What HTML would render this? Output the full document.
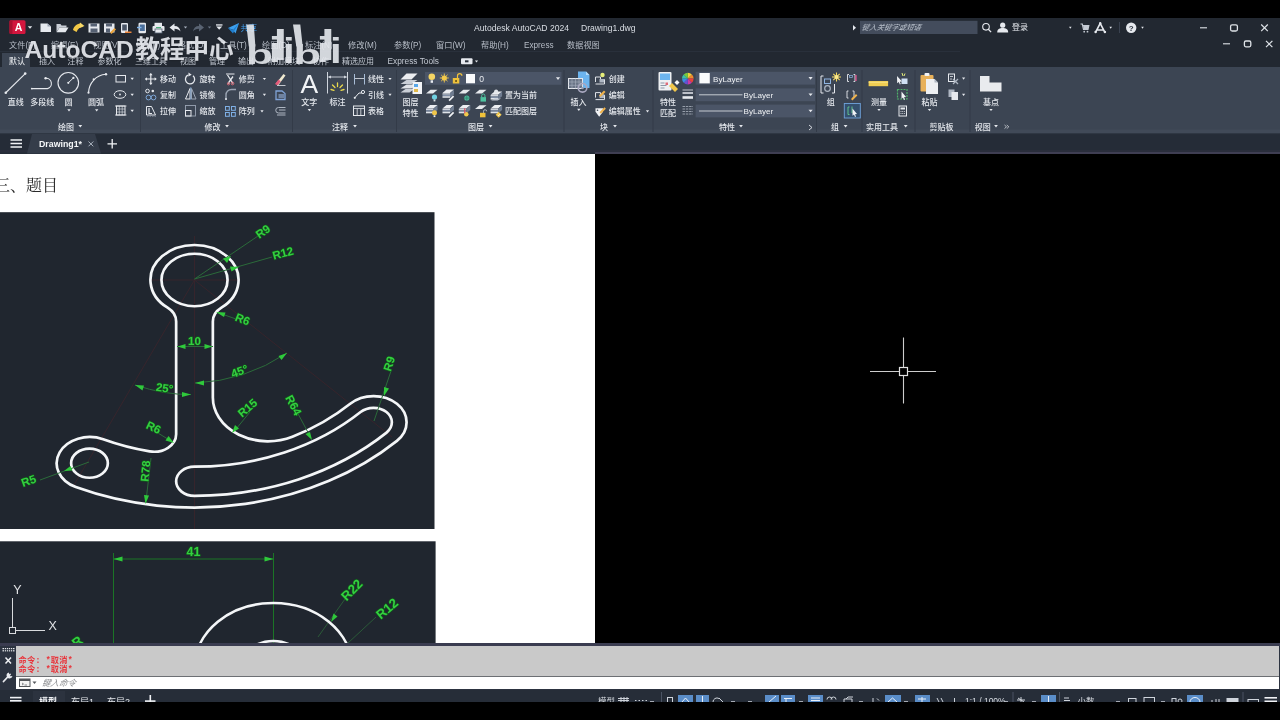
<!DOCTYPE html>
<html lang="zh">
<head>
<meta charset="utf-8">
<title>Autodesk AutoCAD 2024 - Drawing1.dwg</title>
<style>
*{box-sizing:border-box;margin:0;padding:0}
html,body{width:1280px;height:720px;overflow:hidden;background:#000}
body{font-family:"Liberation Sans","Noto Sans CJK SC",sans-serif;color:#dfe3e8;font-size:9px}
#app{position:relative;width:1280px;height:720px;background:#000;overflow:hidden;filter:blur(.35px)}
.abs{position:absolute}
#title{position:absolute;left:0;top:18px;width:1280px;height:34px;background:#212832}
#tabs{position:absolute;left:0;top:52px;width:1280px;height:15px;background:#212832}
#ribbon{position:absolute;left:0;top:67px;width:1280px;height:67px;background:#3a4351}
#doctabs{position:absolute;left:0;top:134px;width:1280px;height:20px;background:#242b36}
#paper{position:absolute;left:0;top:154px;width:595px;height:489px;background:#fff;overflow:hidden}
#model{position:absolute;left:595px;top:154px;width:685px;height:489px;background:#000}
#cmd{position:absolute;left:0;top:642.5px;width:1280px;height:47.5px;background:#2c3340}
#status{position:absolute;left:0;top:690px;width:1280px;height:12px;background:#262d38;overflow:hidden}
.t{position:absolute;white-space:nowrap;line-height:1}
</style>
</head>
<body>
<div id="app">
<svg class="abs" style="left:0;top:18px" width="1280" height="136" viewBox="0 18 1280 136" font-family="'Liberation Sans','Noto Sans CJK SC',sans-serif">
<rect x="0" y="18" width="1280" height="50" fill="#222831"/>
<rect x="0" y="51" width="960" height="1" fill="#29303b"/>
<rect x="0" y="67" width="1280" height="67" fill="#3c4553"/>
<rect x="2" y="53" width="28" height="15" fill="#3c4553"/>
<rect x="0" y="133" width="1280" height="21" fill="#252c37"/>
<rect x="0" y="133.3" width="1280" height="1" fill="#2b323e"/>
<rect x="0" y="129.5" width="1280" height="3.8" fill="#414a58"/>
<rect x="0" y="150" width="1280" height="2.5" fill="#2a2e3c"/>
<rect x="595" y="152.3" width="685" height="1.4" fill="#4a465e"/>
<rect x="9.5" y="20.3" width="16" height="13.6" rx="1.5" fill="#d3163e"/>
<rect x="9.5" y="20.3" width="3" height="13.6" rx="1" fill="#a8102f"/>
<text x="18.6" y="31.09" font-size="10.5" fill="#fff" font-weight="bold" text-anchor="middle" >A</text>
<path d="M27.8 26.2h4.4l-2.2 2.6z" fill="#e4e7ec"/>
<path d="M40.5 23.5h7l3.5 3v5.5h-10.5z" fill="#e6e9ee"/><path d="M47.5 23.5v3h3.5" fill="#9aa3b0"/>
<path d="M56.5 24h4l1 1.5h5v2h-7l-3 4.5z" fill="#c9ced6"/><path d="M59.5 27.5h9l-3 4.8h-9z" fill="#e6e9ee"/>
<path d="M73 30c1-4 4-6.5 8-6.5l2 3.5c-3 0-5 1.5-6.5 5z" fill="#f3c846"/><path d="M80 22.5l4.5 3.5-5 2z" fill="#f7d968"/>
<rect x="88.5" y="23.5" width="11" height="9" fill="#e6e9ee"/><rect x="90.5" y="23.5" width="6.5" height="3" fill="#566173"/><rect x="90.5" y="28.5" width="7" height="4" fill="#566173"/>
<rect x="104" y="23.5" width="10.5" height="9" fill="#e6e9ee"/><rect x="106" y="23.5" width="6" height="3" fill="#566173"/><rect x="106" y="28.5" width="4" height="4" fill="#566173"/><path d="M110 32.5l4.5-4.5 1.5 1.5-4.5 4.5z" fill="#e9a33c"/>
<rect x="121" y="23" width="7" height="10" rx="1" fill="#e6e9ee"/><rect x="122.2" y="24.5" width="4.6" height="6" fill="#4a5566"/><path d="M125 31.5h6.5v1.5h-6.5z" fill="#e9843c"/>
<rect x="138.5" y="22.8" width="7.5" height="10.5" rx="1.2" fill="#e6e9ee"/><rect x="139.8" y="24.5" width="5" height="6.5" fill="#4a6e9a"/><path d="M137 27.5h4.5" stroke="#7fb6ee" stroke-width="1.4"/>
<rect x="154.5" y="22.8" width="7.5" height="3.5" fill="#e6e9ee"/><rect x="152.5" y="26" width="12" height="5" rx="1" fill="#e6e9ee"/><rect x="155" y="29" width="7" height="4" fill="#e6e9ee" stroke="#566173" stroke-width=".8"/><rect x="156" y="27" width="5" height="1.2" fill="#4fae7a"/>
<path d="M169.5 27.5l5-4v2.5c3.5 0 5.5 2 6 5.5-1.5-2-3-2.8-6-2.8v2.8z" fill="#e6e9ee"/>
<path d="M183.8 26.4h3.4l-1.7 2.2z" fill="#aab2bf"/>
<path d="M204 27.5l-5-4v2.5c-3.5 0-5.5 2-6 5.5 1.5-2 3-2.8 6-2.8v2.8z" fill="#596372"/>
<path d="M207.8 26.4h3.4l-1.7 2.2z" fill="#6a7484"/>
<rect x="216" y="24.3" width="6.5" height="1.3" fill="#e6e9ee"/>
<path d="M216.2 26.599999999999998h6l-3 3.2z" fill="#e6e9ee"/>
<path d="M228 28l11-5-3.5 10.5-2.5-3.8z" fill="#3da0ee"/><path d="M228 28l5 1.7 6-6.7-4.5 7.5-1.5 3z" fill="#1f7fd0"/>
<text x="240.5" y="30.61" font-size="8.4" fill="#3d9df0" font-weight="normal" text-anchor="start" >共享</text>
<text x="474" y="30.68" font-size="8.6" fill="#d9dde3" font-weight="normal" text-anchor="start" >Autodesk AutoCAD 2024</text>
<text x="581" y="30.68" font-size="8.6" fill="#d9dde3" font-weight="normal" text-anchor="start" >Drawing1.dwg</text>
<path d="M853 25l3 2.75-3 2.75z" fill="#e6e9ee"/>
<rect x="860" y="20.8" width="117.5" height="13.2" fill="#434c5c"/>
<text x="862" y="30.24" font-size="7.4" fill="#b9c0cb" font-weight="normal" text-anchor="start" font-style="italic" transform="translate(5.8 0) skewX(-12)">键入关键字或短语</text>
<circle cx="986" cy="26.8" r="3.3" fill="none" stroke="#e6e9ee" stroke-width="1.1"/><path d="M988.3 29.3l2.8 2.8" stroke="#e6e9ee" stroke-width="1.3"/>
<circle cx="1002.7" cy="25.2" r="2.6" fill="#e6e9ee"/><path d="M997.2 32.5c0-3.5 2.5-4.5 5.5-4.5s5.5 1 5.5 4.5z" fill="#e6e9ee"/>
<text x="1012" y="30.46" font-size="8" fill="#e4e7ec" font-weight="normal" text-anchor="start" >登录</text>
<path d="M1069 26.8h2.6l-1.3 2z" fill="#e6e9ee"/>
<path d="M1080.5 24h1.8l1.2 5.5h4.5l.8-4h-5.8" fill="none" stroke="#c4cad3" stroke-width="1.2"/><path d="M1083 25.3h5.8l-.8 3.8h-4.3z" fill="#c4cad3"/><circle cx="1084.2" cy="31.7" r=".9" fill="#c4cad3"/><circle cx="1087.5" cy="31.7" r=".9" fill="#c4cad3"/>
<path d="M1095.5 32.3l4.7-9 4.7 9M1097 30h6.5" fill="none" stroke="#e6e9ee" stroke-width="1.6" stroke-linejoin="round"/><circle cx="1100.2" cy="23.3" r="1.2" fill="#e6e9ee"/><circle cx="1095.6" cy="32" r="1.2" fill="#e6e9ee"/><circle cx="1104.9" cy="32" r="1.2" fill="#e6e9ee"/>
<path d="M1109.4 26.8h2.6l-1.3 2z" fill="#e6e9ee"/>
<rect x="1119" y="22" width="1" height="11" fill="#3a4250"/>
<circle cx="1131.2" cy="27.7" r="5.2" fill="#e6e9ee"/>
<text x="1131.2" y="30.86" font-size="8" fill="#2a313c" font-weight="bold" text-anchor="middle" >?</text>
<path d="M1141.2 26.8h2.6l-1.3 2z" fill="#e6e9ee"/>
<path d="M1200 27.8h7" stroke="#dfe3e8" stroke-width="1.1"/>
<rect x="1230.6" y="24.8" width="6.8" height="6.2" rx="1.5" fill="none" stroke="#dfe3e8" stroke-width="1.3"/>
<path d="M1261.2 24.5l6.6 6.6M1267.8 24.5l-6.6 6.6" stroke="#dfe3e8" stroke-width="1.2"/>
<path d="M1223 43.8h7" stroke="#dfe3e8" stroke-width="1.1"/>
<rect x="1244.4" y="41" width="6.4" height="5.8" rx="1.5" fill="none" stroke="#dfe3e8" stroke-width="1.3"/>
<path d="M1266 40.8l6.4 6.4M1272.4 40.8l-6.4 6.4" stroke="#dfe3e8" stroke-width="1.2"/>
<text x="9" y="47.83" font-size="8.2" fill="#b6bcc6" font-weight="normal" text-anchor="start" >文件(F)</text>
<text x="51" y="47.83" font-size="8.2" fill="#b6bcc6" font-weight="normal" text-anchor="start" >编辑(E)</text>
<text x="93" y="47.83" font-size="8.2" fill="#b6bcc6" font-weight="normal" text-anchor="start" >视图(V)</text>
<text x="136" y="47.83" font-size="8.2" fill="#b6bcc6" font-weight="normal" text-anchor="start" >插入(I)</text>
<text x="178" y="47.83" font-size="8.2" fill="#b6bcc6" font-weight="normal" text-anchor="start" >格式(O)</text>
<text x="220" y="47.83" font-size="8.2" fill="#b6bcc6" font-weight="normal" text-anchor="start" >工具(T)</text>
<text x="262" y="47.83" font-size="8.2" fill="#b6bcc6" font-weight="normal" text-anchor="start" >绘图(D)</text>
<text x="305" y="47.83" font-size="8.2" fill="#b6bcc6" font-weight="normal" text-anchor="start" >标注(N)</text>
<text x="348" y="47.83" font-size="8.2" fill="#b6bcc6" font-weight="normal" text-anchor="start" >修改(M)</text>
<text x="394" y="47.83" font-size="8.2" fill="#b6bcc6" font-weight="normal" text-anchor="start" >参数(P)</text>
<text x="436" y="47.83" font-size="8.2" fill="#b6bcc6" font-weight="normal" text-anchor="start" >窗口(W)</text>
<text x="481" y="47.83" font-size="8.2" fill="#b6bcc6" font-weight="normal" text-anchor="start" >帮助(H)</text>
<text x="524" y="47.83" font-size="8.2" fill="#b6bcc6" font-weight="normal" text-anchor="start" >Express</text>
<text x="567" y="47.83" font-size="8.2" fill="#b6bcc6" font-weight="normal" text-anchor="start" >数据视图</text>
<text x="9" y="64.26" font-size="8" fill="#f2f4f7" font-weight="normal" text-anchor="start" >默认</text>
<text x="39" y="64.26" font-size="8" fill="#c2c8d1" font-weight="normal" text-anchor="start" >插入</text>
<text x="67.5" y="64.26" font-size="8" fill="#c2c8d1" font-weight="normal" text-anchor="start" >注释</text>
<text x="97.5" y="64.26" font-size="8" fill="#c2c8d1" font-weight="normal" text-anchor="start" >参数化</text>
<text x="135" y="64.26" font-size="8" fill="#c2c8d1" font-weight="normal" text-anchor="start" >三维工具</text>
<text x="180" y="64.26" font-size="8" fill="#c2c8d1" font-weight="normal" text-anchor="start" >视图</text>
<text x="209" y="64.26" font-size="8" fill="#c2c8d1" font-weight="normal" text-anchor="start" >管理</text>
<text x="238" y="64.26" font-size="8" fill="#c2c8d1" font-weight="normal" text-anchor="start" >输出</text>
<text x="268" y="64.26" font-size="8" fill="#c2c8d1" font-weight="normal" text-anchor="start" >附加模块</text>
<text x="313" y="64.26" font-size="8" fill="#c2c8d1" font-weight="normal" text-anchor="start" >协作</text>
<text x="342" y="64.26" font-size="8" fill="#c2c8d1" font-weight="normal" text-anchor="start" >精选应用</text>
<text x="387.5" y="64.37" font-size="8.3" fill="#c2c8d1" font-weight="normal" text-anchor="start" >Express Tools</text>
<rect x="461" y="58.3" width="11.5" height="6" rx="1" fill="#e6e9ee"/><rect x="465" y="60.3" width="3.5" height="2" fill="#2a313c"/>
<path d="M474.9 60.4h3.2l-1.6 2.2z" fill="#e6e9ee"/>
<rect x="140" y="70" width="1" height="62" fill="#333b48"/>
<rect x="292" y="70" width="1" height="62" fill="#333b48"/>
<rect x="396" y="70" width="1" height="62" fill="#333b48"/>
<rect x="563.5" y="70" width="1" height="62" fill="#333b48"/>
<rect x="652.5" y="70" width="1" height="62" fill="#333b48"/>
<rect x="816" y="70" width="1" height="62" fill="#333b48"/>
<rect x="861.5" y="70" width="1" height="62" fill="#333b48"/>
<rect x="914.5" y="70" width="1" height="62" fill="#333b48"/>
<rect x="969.5" y="70" width="1" height="62" fill="#333b48"/>
<path d="M6 92.5L25 73.8" stroke="#e6e9ee" fill="none" stroke-width="1.1"/><circle cx="5.8" cy="92.7" r="1.3" fill="#e6e9ee"/><circle cx="25.2" cy="73.6" r="1.3" fill="#e6e9ee"/>
<text x="15.7" y="104.56" font-size="8" fill="#e4e7ec" font-weight="500" text-anchor="middle" >直线</text>
<path d="M31.6 88.6H47.5A5.3 5.3 0 0 0 45.8 78.2" stroke="#e6e9ee" fill="none" stroke-width="1.1"/><circle cx="45.6" cy="78.2" r="1.2" fill="#e6e9ee"/><circle cx="31.8" cy="88.6" r=".9" fill="#e6e9ee"/>
<text x="42.3" y="104.56" font-size="8" fill="#e4e7ec" font-weight="500" text-anchor="middle" >多段线</text>
<circle cx="68.3" cy="82.8" r="10.3" stroke="#e6e9ee" fill="none" stroke-width="1.1"/><path d="M68.3 82.8L73.3 78" stroke="#e6e9ee" fill="none" stroke-width="1"/><circle cx="68.3" cy="82.8" r="1.1" fill="#e6e9ee"/><circle cx="73.4" cy="77.9" r="1.1" fill="#e6e9ee"/>
<text x="68.4" y="104.56" font-size="8" fill="#e4e7ec" font-weight="500" text-anchor="middle" >圆</text>
<path d="M67.3 109.2h3.4l-1.7 2.2z" fill="#e6e9ee"/>
<path d="M88.5 92.7C89 83 96 75 106 74.3" stroke="#e6e9ee" fill="none" stroke-width="1.1"/><circle cx="88.5" cy="92.7" r="1.1" fill="#e6e9ee"/><circle cx="106" cy="74.3" r="1.2" fill="#e6e9ee"/><circle cx="93.7" cy="79.3" r="1.1" fill="#e6e9ee"/>
<text x="96" y="104.56" font-size="8" fill="#e4e7ec" font-weight="500" text-anchor="middle" >圆弧</text>
<path d="M95 109.2h3.4l-1.7 2.2z" fill="#e6e9ee"/>
<rect x="116" y="75.5" width="9.5" height="6.5" stroke="#e6e9ee" fill="none" stroke-width="1"/>
<path d="M130.5 77.7h3.4l-1.7 2.2z" fill="#e6e9ee"/>
<ellipse cx="120" cy="94.5" rx="5.8" ry="3.8" stroke="#e6e9ee" fill="none" stroke-width="1"/><circle cx="120" cy="94.5" r=".9" fill="#e6e9ee"/>
<path d="M130.5 93.7h3.4l-1.7 2.2z" fill="#e6e9ee"/>
<rect x="116.5" y="106" width="8.5" height="9" stroke="#e6e9ee" fill="none" stroke-width="1"/><path d="M116.5 109h8.5M116.5 112h8.5M119.3 106v9M122.2 106v9" stroke="#e6e9ee" fill="none" stroke-width=".6"/><path d="M115 106h11.5M115 115h11.5" stroke="#e6e9ee" fill="none" stroke-width=".8"/>
<path d="M130.5 109.7h3.4l-1.7 2.2z" fill="#e6e9ee"/>
<text x="58" y="129.56" font-size="8" fill="#e4e7ec" font-weight="500" text-anchor="start" >绘图</text>
<path d="M78.39999999999999 125.1h3.8l-1.9 2.4z" fill="#e6e9ee"/>
<path d="M150.8 73.8v10.5M145.6 79h10.4" stroke="#e6e9ee" fill="none" stroke-width="1.2"/><path d="M150.8 73l1.8 2.2h-3.6zM150.8 85l1.8-2.2h-3.6zM144.8 79l2.2-1.8v3.6zM156.8 79l-2.2-1.8v3.6z" fill="#e6e9ee"/>
<text x="160" y="81.96" font-size="8" fill="#e4e7ec" font-weight="500" text-anchor="start" >移动</text>
<circle cx="147.5" cy="91" r="1.8" stroke="#e6e9ee" fill="none" stroke-width="1"/><circle cx="152.8" cy="91" r="1.3" fill="#e6e9ee"/><circle cx="148.5" cy="97.5" r="2.4" fill="none" stroke="#7ea7d8" stroke-width="1"/><circle cx="153.5" cy="97.5" r="2.4" fill="none" stroke="#7ea7d8" stroke-width="1"/>
<text x="160" y="97.56" font-size="8" fill="#e4e7ec" font-weight="500" text-anchor="start" >复制</text>
<path d="M146.5 106.5h5l4 8.5h-9z" stroke="#e6e9ee" fill="none" stroke-width="1"/><path d="M149 108v5.5h3" stroke="#e6e9ee" fill="none" stroke-width="1.2"/><path d="M147 116.2h9" stroke="#8d97a6" stroke-width=".8" stroke-dasharray="1.5 1"/>
<text x="160" y="114.26" font-size="8" fill="#e4e7ec" font-weight="500" text-anchor="start" >拉伸</text>
<path d="M193 75.8a4.6 4.6 0 1 1-5 -.6" stroke="#e6e9ee" fill="none" stroke-width="1.3"/><path d="M188.5 72.5l3.2 2.3-3.4 1.8z" fill="#e6e9ee"/>
<text x="199.4" y="81.96" font-size="8" fill="#e4e7ec" font-weight="500" text-anchor="start" >旋转</text>
<path d="M190 88.5l-4.5 10.5h4.5z" stroke="#e6e9ee" fill="none" stroke-width="1"/><path d="M191.5 88.5l4.5 10.5h-4.5z" fill="none" stroke="#9aa4b3" stroke-width="1"/><path d="M190.8 87v13" stroke="#7ea7d8" stroke-width=".7"/>
<text x="199.4" y="97.56" font-size="8" fill="#e4e7ec" font-weight="500" text-anchor="start" >镜像</text>
<rect x="185.5" y="105.5" width="10" height="10.5" fill="none" stroke="#9aa4b3" stroke-width=".9"/><rect x="185.5" y="110.5" width="5.5" height="5.5" stroke="#e6e9ee" fill="none" stroke-width="1"/>
<text x="199.4" y="114.26" font-size="8" fill="#e4e7ec" font-weight="500" text-anchor="start" >缩放</text>
<path d="M226 74h8.5" stroke="#e6e9ee" fill="none" stroke-width="1"/><path d="M227.5 75l5.5 8.5M233 76.5l-5 7" stroke="#e6e9ee" fill="none" stroke-width="1.3"/><circle cx="232.5" cy="83.5" r="1.3" fill="none" stroke="#e06a78" stroke-width="1"/><circle cx="228.5" cy="83.8" r="1.1" fill="none" stroke="#e06a78" stroke-width="1"/>
<text x="238.8" y="81.96" font-size="8" fill="#e4e7ec" font-weight="500" text-anchor="start" >修剪</text>
<path d="M262.79999999999995 77.9h3.2l-1.6 2.2z" fill="#e6e9ee"/>
<path d="M226 100v-5a5.5 5.5 0 0 1 5.5-5.5h4.5" fill="none" stroke="#9aa4b3" stroke-width="1.4"/><path d="M226 100v-2" stroke="#e6e9ee" stroke-width="1.4"/>
<text x="238.8" y="97.56" font-size="8" fill="#e4e7ec" font-weight="500" text-anchor="start" >圆角</text>
<path d="M262.79999999999995 93.7h3.2l-1.6 2.2z" fill="#e6e9ee"/>
<rect x="225.5" y="106.5" width="3.8" height="3.8" fill="none" stroke="#7fb0e6" stroke-width="1"/>
<rect x="231.5" y="106.5" width="3.8" height="3.8" fill="none" stroke="#7fb0e6" stroke-width="1"/>
<rect x="225.5" y="112.5" width="3.8" height="3.8" fill="none" stroke="#7fb0e6" stroke-width="1"/>
<rect x="231.5" y="112.5" width="3.8" height="3.8" fill="none" stroke="#7fb0e6" stroke-width="1"/>
<text x="238.8" y="114.26" font-size="8" fill="#e4e7ec" font-weight="500" text-anchor="start" >阵列</text>
<path d="M260.4 110.2h3.2l-1.6 2.2z" fill="#e6e9ee"/>
<path d="M276 83.5l7.5-9.5 2 1.5-7 9.5z" fill="#f0ead0"/><path d="M275 84l3.5-4.5 2.2 1.7-3.2 4.3z" fill="#e25a7a"/><path d="M277 85.5h8.5" stroke="#e6e9ee" stroke-width=".8"/>
<path d="M276 91h6l3 2.5v6h-9z" fill="none" stroke="#7fa2d6" stroke-width="1.3"/><path d="M278.5 94h5.5v4h-5.5z" fill="#9bb6e0" opacity=".55"/>
<path d="M285.5 107.5h-7a2.7 2.7 0 0 0 0 5.5h7M285.5 110h-6.5M285.5 115h-8.5" fill="none" stroke="#aeb6c2" stroke-width="1"/>
<text x="204.4" y="129.56" font-size="8" fill="#e4e7ec" font-weight="500" text-anchor="start" >修改</text>
<path d="M225.1 125.1h3.8l-1.9 2.4z" fill="#e6e9ee"/>
<text x="309.3" y="93.21" font-size="26.5" fill="#f1f3f6" font-weight="normal" text-anchor="middle" >A</text>
<text x="309.3" y="104.56" font-size="8" fill="#e4e7ec" font-weight="500" text-anchor="middle" >文字</text>
<path d="M307.7 109.10000000000001h3.4l-1.7 2.2z" fill="#e6e9ee"/>
<path d="M327.5 72v21.5M347.5 72v21.5" stroke="#cfd4dc" stroke-width="1"/><path d="M328.5 77h18" stroke="#cfd4dc" stroke-width=".9"/><path d="M328 77l3-1.5v3zM347 77l-3-1.5v3z" fill="#cfd4dc"/>
<path d="M337.5 83v3.5M332.5 85l2.5 2.5M342.5 85l-2.5 2.5M331 89.5l3 .8M344 89.5l-3 .8" stroke="#ead94c" stroke-width="1.3" stroke-linecap="round"/>
<text x="337.4" y="104.56" font-size="8" fill="#e4e7ec" font-weight="500" text-anchor="middle" >标注</text>
<path d="M354.5 74v10.5M364.5 74v10.5" stroke="#a9bdd6" stroke-width="1"/><path d="M355 78.5h9" stroke="#cfd4dc" stroke-width=".9"/>
<text x="368" y="81.96" font-size="8" fill="#e4e7ec" font-weight="500" text-anchor="start" >线性</text>
<path d="M388.4 77.9h3.2l-1.6 2.2z" fill="#e6e9ee"/>
<path d="M355 97.5l4-4.5h3" stroke="#e6e9ee" fill="none" stroke-width="1"/><circle cx="363" cy="92" r="1.6" stroke="#e6e9ee" fill="none" stroke-width="1"/><circle cx="354.8" cy="97.8" r="1.1" fill="#e6e9ee"/>
<text x="368" y="97.56" font-size="8" fill="#e4e7ec" font-weight="500" text-anchor="start" >引线</text>
<path d="M388.4 93.7h3.2l-1.6 2.2z" fill="#e6e9ee"/>
<rect x="353.5" y="106" width="11" height="9.5" stroke="#e6e9ee" fill="none" stroke-width="1"/><path d="M353.5 108.5h11M357.2 108.5v7M360.8 108.5v7" stroke="#e6e9ee" fill="none" stroke-width=".8"/>
<text x="368" y="114.26" font-size="8" fill="#e4e7ec" font-weight="500" text-anchor="start" >表格</text>
<text x="332" y="129.56" font-size="8" fill="#e4e7ec" font-weight="500" text-anchor="start" >注释</text>
<path d="M353.1 125.1h3.8l-1.9 2.4z" fill="#e6e9ee"/>
<path d="M400.5 79.5l6-6h11l-6 6z" fill="#eceef1"/><path d="M400.5 84l6-4h11l-6 4z" fill="#c9ced6"/><path d="M400.5 88.5l6-4h11l-6 4z" fill="#dfe2e7"/><path d="M400.5 92.5l5-3.5h9l-5 3.5z" fill="#c9ced6"/>
<rect x="412.5" y="82" width="9.5" height="12" fill="#f1f3f6"/><rect x="414" y="84" width="4" height="3" fill="#58a7e8"/><rect x="414" y="89" width="4" height="3" fill="#e2b94a"/>
<text x="410.6" y="104.76" font-size="8" fill="#e4e7ec" font-weight="500" text-anchor="middle" >图层</text>
<text x="410.6" y="115.86" font-size="8" fill="#e4e7ec" font-weight="500" text-anchor="middle" >特性</text>
<rect x="425" y="72" width="136.5" height="12.8" fill="#4b5567"/>
<circle cx="431.8" cy="76.8" r="3.3" fill="#f4d564"/><rect x="430.6" y="80.3" width="2.4" height="2.5" fill="#e9edf2"/>
<circle cx="444.3" cy="78" r="2.6" fill="#f2c94c"/><path d="M444.3 73.5v9M439.8 78h9M441.1 74.8l6.4 6.4M447.5 74.8l-6.4 6.4" stroke="#f2c94c" stroke-width=".9"/>
<rect x="452.8" y="78" width="6.5" height="5.5" fill="#f0c23a"/><path d="M457.5 78v-2.2a2.2 2.2 0 0 1 4.4 0" fill="none" stroke="#f0c23a" stroke-width="1.2"/><rect x="455.3" y="80" width="1.5" height="2" fill="#5b4a14"/>
<rect x="466" y="74" width="9" height="9.3" fill="#fafbfc"/>
<text x="479.3" y="81.58" font-size="8.6" fill="#e9ecf0" font-weight="500" text-anchor="start" >0</text>
<path d="M555.9 77.3h4.2l-2.1 2.6z" fill="#e6e9ee"/>
<path d="M426 93.5l4.5-3.8h7l-4.5 3.8z" fill="#e6e9ed"/>
<circle cx="434.5" cy="97.1" r="2.6" fill="#6fd0e0"/><rect x="433.6" y="99.6" width="1.8" height="1.8" fill="#dfe6ea"/>
<path d="M442.5 93l4-3.4h7.5l-4 3.4z" fill="#eceef2"/>
<path d="M442.5 93.2h7.5v1.5h-7.5z" fill="#cfd4dc"/><path d="M442.5 94.7h7.5v1.5h-7.5z" fill="#7f8ea6"/><path d="M442.5 96.2h7.5v1.6h-7.5z" fill="#dfe3e8"/><path d="M450 93.2l4-3.4v4.6l-4 3.4z" fill="#6f7c90"/>
<path d="M448.5 100.1l4.5-4.5 1.2 1.2-4.5 4.5z" fill="#f1f3f6"/>
<path d="M458.8 93.5l4.5-3.8h7l-4.5 3.8z" fill="#e6e9ed"/>
<circle cx="466.8" cy="98.1" r="2.6" fill="#4fb59a"/><path d="M463.8 98.1h6M466.8 95.1v6" stroke="#2d7f6b" stroke-width=".7"/>
<path d="M475 93.5l4.5-3.8h7l-4.5 3.8z" fill="#e6e9ed"/>
<rect x="480.5" y="97.1" width="5.5" height="4.5" fill="#4fc2a0"/><path d="M481.7 97.1v-1.5a1.6 1.6 0 0 1 3.2 0v1.5" fill="none" stroke="#4fc2a0" stroke-width="1"/>
<path d="M490.6 94.8l4-3.4h7.5l-4 3.4z" fill="#eceef2"/>
<path d="M490.6 95h7.5v1.5h-7.5z" fill="#cfd4dc"/><path d="M490.6 96.5h7.5v1.5h-7.5z" fill="#7f8ea6"/><path d="M490.6 98h7.5v1.6h-7.5z" fill="#dfe3e8"/><path d="M498.1 95l4-3.4v4.6l-4 3.4z" fill="#6f7c90"/>
<circle cx="496.1" cy="91.6" r="2" fill="#e3e6eb"/><path d="M491.1 100.6l3.5-2h6.5l-3.5 2z" fill="#b9c0cb"/>
<text x="505" y="97.56" font-size="8" fill="#e4e7ec" font-weight="500" text-anchor="start" >置为当前</text>
<path d="M426 108.5l4-3.4h7.5l-4 3.4z" fill="#eceef2"/>
<path d="M426 108.7h7.5v1.5h-7.5z" fill="#cfd4dc"/><path d="M426 110.2h7.5v1.5h-7.5z" fill="#7f8ea6"/><path d="M426 111.7h7.5v1.6h-7.5z" fill="#dfe3e8"/><path d="M433.5 108.7l4-3.4v4.6l-4 3.4z" fill="#6f7c90"/>
<circle cx="434.5" cy="112.8" r="2.5" fill="#f0c64a"/><rect x="433.6" y="115.3" width="1.8" height="1.8" fill="#e9edf2"/>
<path d="M442.5 108.5l4-3.4h7.5l-4 3.4z" fill="#eceef2"/>
<path d="M442.5 108.7h7.5v1.5h-7.5z" fill="#cfd4dc"/><path d="M442.5 110.2h7.5v1.5h-7.5z" fill="#7f8ea6"/><path d="M442.5 111.7h7.5v1.6h-7.5z" fill="#dfe3e8"/><path d="M450 108.7l4-3.4v4.6l-4 3.4z" fill="#6f7c90"/>
<path d="M448.5 116.3l4.5-4.5 1.2 1.2-4.5 4.5z" fill="#f1f3f6"/>
<path d="M458.8 108.5l4-3.4h7.5l-4 3.4z" fill="#eceef2"/>
<path d="M458.8 108.7h7.5v1.5h-7.5z" fill="#cfd4dc"/><path d="M458.8 110.2h7.5v1.5h-7.5z" fill="#7f8ea6"/><path d="M458.8 111.7h7.5v1.6h-7.5z" fill="#dfe3e8"/><path d="M466.3 108.7l4-3.4v4.6l-4 3.4z" fill="#6f7c90"/>
<circle cx="466.3" cy="114.3" r="2.2" fill="#f2c94c"/><path d="M464.8 108.3v5" stroke="#d64a5c" stroke-width="1.2"/>
<path d="M475 109l4.5-3.8h7l-4.5 3.8z" fill="#e6e9ed"/>
<rect x="480" y="112.8" width="5.5" height="4.5" fill="#f0c23a"/><path d="M483.5 112.8v-1.5a1.6 1.6 0 0 1 3.2 0" fill="none" stroke="#aeb6c2" stroke-width="1"/>
<path d="M490.6 108.5l4-3.4h7.5l-4 3.4z" fill="#eceef2"/>
<path d="M490.6 108.7h7.5v1.5h-7.5z" fill="#cfd4dc"/><path d="M490.6 110.2h7.5v1.5h-7.5z" fill="#7f8ea6"/><path d="M490.6 111.7h7.5v1.6h-7.5z" fill="#dfe3e8"/><path d="M498.1 108.7l4-3.4v4.6l-4 3.4z" fill="#6f7c90"/>
<path d="M495.6 114.8l3-3 3 3-3 3z" fill="#f0c64a"/><path d="M497.6 114.8l1 1 1.5-1.8" stroke="#fff" stroke-width=".7" fill="none"/>
<text x="505" y="114.26" font-size="8" fill="#e4e7ec" font-weight="500" text-anchor="start" >匹配图层</text>
<text x="468" y="129.56" font-size="8" fill="#e4e7ec" font-weight="500" text-anchor="start" >图层</text>
<path d="M488.70000000000005 125.1h3.8l-1.9 2.4z" fill="#e6e9ee"/>
<path d="M578 71.5h8l3.5 3.5v13h-11.5z" fill="#6cb4ee"/><path d="M586 71.5v3.5h3.5z" fill="#b6dbf8"/>
<rect x="568.5" y="78.5" width="14" height="10" fill="#6a7587" stroke="#e6e9ee" stroke-width="1"/><path d="M568.5 82h14M568.5 85.3h14M572 78.5v10M575.5 78.5v10M579 78.5v10" stroke="#aab2bf" stroke-width=".6"/>
<circle cx="582.5" cy="87.8" r="4.3" fill="none" stroke="#a9a8c0" stroke-width="1.6"/><circle cx="582.5" cy="88" r="1.3" fill="#9a9fb2"/>
<text x="578.4" y="104.56" font-size="8" fill="#e4e7ec" font-weight="500" text-anchor="middle" >插入</text>
<path d="M577.0999999999999 108.7h3.4l-1.7 2.2z" fill="#e6e9ee"/>
<path d="M595.5 82v-5h5v2.5h4v4.5h-9" fill="none" stroke="#dfe3e8" stroke-width="1"/><rect x="599.5" y="79" width="4.5" height="3.5" fill="#aeb6c2"/>
<circle cx="602.5" cy="75" r="2.2" fill="#e6ee7a"/>
<path d="M595.5 97.6v-5h5v2.5h4v4.5h-9" fill="none" stroke="#dfe3e8" stroke-width="1"/><rect x="599.5" y="94.6" width="4.5" height="3.5" fill="#aeb6c2"/>
<path d="M599 95.6l5-5 1.5 1.5-5 5z" fill="#f0b24a"/>
<path d="M595.5 108.3h7.5l-0 3.5-3.8 5-3.7-5z" fill="#f1f3f6"/><path d="M599.5 112.3l5-5 1.4 1.4-5 5z" fill="#f0b24a"/><circle cx="597.5" cy="110.3" r=".8" fill="#3c4553"/>
<text x="608.8" y="81.96" font-size="8" fill="#e4e7ec" font-weight="500" text-anchor="start" >创建</text>
<text x="608.8" y="97.56" font-size="8" fill="#e4e7ec" font-weight="500" text-anchor="start" >编辑</text>
<text x="608.8" y="114.26" font-size="8" fill="#e4e7ec" font-weight="500" text-anchor="start" >编辑属性</text>
<path d="M645.9 110.2h3.2l-1.6 2.2z" fill="#e6e9ee"/>
<text x="600" y="129.56" font-size="8" fill="#e4e7ec" font-weight="500" text-anchor="start" >块</text>
<path d="M613.1 125.1h3.8l-1.9 2.4z" fill="#e6e9ee"/>
<rect x="658.5" y="72" width="13" height="18.5" rx="1" fill="#eef0f3"/><rect x="660" y="73.5" width="10" height="6.5" fill="#6cb4ee"/><path d="M660.5 83h4M660.5 85.5h6M660.5 88h4" stroke="#8d97a6" stroke-width="1"/><rect x="665.5" y="82.5" width="2.5" height="2.5" fill="#e06a78"/>
<path d="M669 86l3-3 6 6-3 3z" fill="#f0c64a"/><path d="M674.5 82.5l2.5-2.5 2.5 2.5-2.5 2.5z" fill="#f6f7f9"/>
<text x="668" y="104.76" font-size="8" fill="#e4e7ec" font-weight="500" text-anchor="middle" >特性</text>
<text x="668" y="116.26" font-size="8" fill="#e4e7ec" font-weight="500" text-anchor="middle" >匹配</text>
<path d="M687.8 78.6L687.8 72.8A5.8 5.8 0 0 1 691.9 74.5z" fill="#f2d03a"/>
<path d="M687.8 78.6L691.9 74.5A5.8 5.8 0 0 1 693.6 78.6z" fill="#f08a2e"/>
<path d="M687.8 78.6L693.6 78.6A5.8 5.8 0 0 1 691.9 82.7z" fill="#e8413c"/>
<path d="M687.8 78.6L691.9 82.7A5.8 5.8 0 0 1 687.8 84.4z" fill="#c63aa8"/>
<path d="M687.8 78.6L687.8 84.4A5.8 5.8 0 0 1 683.7 82.7z" fill="#6a4fd0"/>
<path d="M687.8 78.6L683.7 82.7A5.8 5.8 0 0 1 682 78.6z" fill="#3a8ee6"/>
<path d="M687.8 78.6L682 78.6A5.8 5.8 0 0 1 683.7 74.5z" fill="#3cc0a8"/>
<path d="M687.8 78.6L683.7 74.5A5.8 5.8 0 0 1 687.8 72.8z" fill="#7acb3c"/>
<path d="M682.5 90h10.5" stroke="#e6e9ee" stroke-width=".8"/><path d="M682.5 93h10.5" stroke="#e6e9ee" stroke-width="1.5"/><path d="M682.5 97.5h10.5" stroke="#e6e9ee" stroke-width="2.6"/>
<path d="M682.5 106.5h10.5M682.5 109h10.5M682.5 111.5h10.5M682.5 114h10.5" stroke="#aeb6c2" stroke-width=".8" stroke-dasharray="2.5 .8"/>
<rect x="695.6" y="71.8" width="119.4" height="12.8" fill="#4b5567"/>
<rect x="695.6" y="88.4" width="119.4" height="12.8" fill="#4b5567"/>
<rect x="695.6" y="104.6" width="119.4" height="12.8" fill="#4b5567"/>
<rect x="699.4" y="73" width="10.4" height="10.4" fill="#fafbfc"/>
<text x="713" y="81.5" font-size="8.1" fill="#eef0f3" font-weight="500" text-anchor="start" >ByLayer</text>
<path d="M699 94.8h43.5" stroke="#d4d8de" stroke-width=".9"/>
<text x="743.6" y="98.1" font-size="8.1" fill="#eef0f3" font-weight="500" text-anchor="start" >ByLayer</text>
<path d="M699 111h43.5" stroke="#d4d8de" stroke-width=".9"/>
<text x="743.6" y="114.3" font-size="8.1" fill="#eef0f3" font-weight="500" text-anchor="start" >ByLayer</text>
<path d="M808.5 77.10000000000001h4.2l-2.1 2.6z" fill="#e6e9ee"/>
<path d="M808.5 93.5h4.2l-2.1 2.6z" fill="#e6e9ee"/>
<path d="M808.5 109.7h4.2l-2.1 2.6z" fill="#e6e9ee"/>
<text x="719" y="129.56" font-size="8" fill="#e4e7ec" font-weight="500" text-anchor="start" >特性</text>
<path d="M739.1 125.1h3.8l-1.9 2.4z" fill="#e6e9ee"/>
<path d="M809 125l3 2.5-3 2.5" stroke="#e6e9ee" fill="none" stroke-width=".9"/>
<path d="M823.5 76h-2.5v17h2.5M832 93h2.5v-9" stroke="#e6e9ee" fill="none" stroke-width="1"/><rect x="824.5" y="79" width="6" height="4.5" fill="none" stroke="#8fb4e0" stroke-width="1"/><circle cx="827.5" cy="88.5" r="2.8" fill="none" stroke="#aeb6c2" stroke-width="1.2"/>
<path d="M836.5 72.5v9M832 77h9M833.3 73.8l6.4 6.4M839.7 73.8l-6.4 6.4" stroke="#f6d960" stroke-width="1.1"/><circle cx="836.5" cy="77" r="2" fill="#fbe98a"/>
<text x="830.7" y="104.56" font-size="8" fill="#e4e7ec" font-weight="500" text-anchor="middle" >组</text>
<path d="M849 74.5h-1.5v7h1.5M853.5 74.5h1.5v7h-1.5" stroke="#e6e9ee" fill="none" stroke-width=".9"/><rect x="849.5" y="75.5" width="3" height="2" fill="none" stroke="#8fb4e0" stroke-width=".7"/><path d="M856 75v6" stroke="#e0508c" stroke-width="1.3"/>
<path d="M848.5 91h-1.5v7h1.5M852.5 91h1.5v7h-1.5" stroke="#e6e9ee" fill="none" stroke-width=".9"/><path d="M851 99l5-5 1.4 1.4-5 5z" fill="#f0b24a"/>
<rect x="844.3" y="103.5" width="16" height="14.5" fill="#34506e" stroke="#6fa3dc" stroke-width=".9"/>
<path d="M849.5 107h-1.5v7.5h1.5" stroke="#5fc08a" fill="none" stroke-width="1"/><path d="M852 106.5v6.5" stroke="#5fc08a" stroke-width="1"/><path d="M852.5 108.5l4.5 5.5-2 .2 1 2.3-1 .4-1-2.3-1.5 1.2z" fill="#f1f3f6"/>
<text x="831" y="129.56" font-size="8" fill="#e4e7ec" font-weight="500" text-anchor="start" >组</text>
<path d="M843.7 125.1h3.8l-1.9 2.4z" fill="#e6e9ee"/>
<rect x="868.6" y="81" width="19.5" height="5.2" fill="#f0cd52"/><path d="M868.6 82.3h19.5" stroke="#f8e48e" stroke-width=".8"/>
<text x="879" y="104.56" font-size="8" fill="#e4e7ec" font-weight="500" text-anchor="middle" >测量</text>
<path d="M877.3 108.9h3.4l-1.7 2.2z" fill="#e6e9ee"/>
<path d="M897 76l5 5.5-2.2.2 1 2.3-1 .4-1-2.3-1.6 1.2z" fill="#f1f3f6"/><rect x="901.5" y="78.5" width="6" height="5.5" fill="#cfe0f4"/><path d="M902 73l1 3M905 73.5l-1 2.5" stroke="#e6ee7a" stroke-width="1"/>
<rect x="897.5" y="89.5" width="9.5" height="9.5" fill="none" stroke="#4fae6a" stroke-width="1.2" stroke-dasharray="2 1"/><path d="M901.5 91.5l4.5 5.5-2 .2 1 2.3-1 .4-1-2.3-1.5 1.2z" fill="#f1f3f6"/>
<rect x="899" y="106" width="7.5" height="10" fill="none" stroke="#e6e9ee" stroke-width="1"/><rect x="900.5" y="107.5" width="4.5" height="2" fill="#e6e9ee"/><path d="M900.5 111.5h4.5M900.5 113.5h4.5" stroke="#e6e9ee" stroke-width=".8" stroke-dasharray="1 .7"/>
<text x="866" y="129.56" font-size="8" fill="#e4e7ec" font-weight="500" text-anchor="start" >实用工具</text>
<path d="M903.8000000000001 125.1h3.8l-1.9 2.4z" fill="#e6e9ee"/>
<rect x="920.5" y="75" width="13" height="16.5" rx="1" fill="#e8b15a"/><rect x="924.5" y="73" width="5" height="3" rx="1" fill="#f3f4f6"/><path d="M926 79h8.5l3.5 3.5v11.5h-12z" fill="#eef0f3"/><path d="M934.5 79v3.5h3.5z" fill="#aeb6c2"/>
<text x="929.5" y="104.56" font-size="8" fill="#e4e7ec" font-weight="500" text-anchor="middle" >粘贴</text>
<path d="M927.8 108.9h3.4l-1.7 2.2z" fill="#e6e9ee"/>
<rect x="948.5" y="74" width="6" height="7.5" fill="none" stroke="#e6e9ee" stroke-width="1"/><path d="M950 76.5h3M950 79h2" stroke="#e6e9ee" stroke-width=".8"/><path d="M953 79l5 5M958 79l-5 5" stroke="#aeb6c2" stroke-width="1.3"/>
<path d="M962 77.5h3.2l-1.6 2.2z" fill="#e6e9ee"/>
<rect x="948.5" y="89.5" width="6" height="7.5" fill="#aeb6c2"/><rect x="951.5" y="92" width="6.5" height="8" fill="#e6e9ee"/>
<path d="M962 93.7h3.2l-1.6 2.2z" fill="#e6e9ee"/>
<text x="929.5" y="129.56" font-size="8" fill="#e4e7ec" font-weight="500" text-anchor="start" >剪贴板</text>
<path d="M980 76h9.5v6.5h12v9h-21.5z" fill="#e9ebee"/>
<text x="991" y="104.56" font-size="8" fill="#e4e7ec" font-weight="500" text-anchor="middle" >基点</text>
<path d="M989.3 108.9h3.4l-1.7 2.2z" fill="#e6e9ee"/>
<text x="974.7" y="129.56" font-size="8" fill="#e4e7ec" font-weight="500" text-anchor="start" >视图</text>
<path d="M994.1 125.1h3.8l-1.9 2.4z" fill="#e6e9ee"/>
<path d="M1004.5 125l2 1.8-2 1.8M1006.8 125l2 1.8-2 1.8" stroke="#e6e9ee" fill="none" stroke-width=".7"/>
<path d="M27 153.5l5-19.5h63l6 19.5z" fill="#353d4a"/>
<path d="M10.5 140h11.5M10.5 143.5h11.5M10.5 147h11.5" stroke="#f1f3f6" stroke-width="1.3"/>
<text x="39" y="147.46" font-size="8.8" fill="#f4f6f8" font-weight="bold" text-anchor="start" >Drawing1*</text>
<path d="M88.5 141.5l4.8 4.8M93.3 141.5l-4.8 4.8" stroke="#aab2be" stroke-width="1"/>
<path d="M112.2 139v9.5M107.5 143.8h9.5" stroke="#f1f3f6" stroke-width="1.3"/>
<g opacity=".9"><text x="24.5" y="58" font-size="24.6" font-weight="bold" fill="#e9ecf1" style="text-shadow:0 0 2px rgba(0,0,0,.5)">AutoCAD<tspan dx="1.5">教程中心</tspan></text>
<g font-weight="bold" fill="#e6e9ee" aria-label="bilibili"><text transform="translate(246 64.3) scale(1.58 1)" font-size="28">b</text><text transform="translate(269.1 61.8) scale(1.2 1)" font-size="35">i</text><text transform="translate(273.5 60) scale(1.15 1)" font-size="43">l</text><text transform="translate(282.9 62.7) scale(1.2 1)" font-size="35">i</text><text transform="translate(293.5 64.3) scale(1.62 1)" font-size="28">b</text><text transform="translate(316.9 61.8) scale(1.2 1)" font-size="35">i</text><text transform="translate(321 60) scale(1.15 1)" font-size="43">l</text><text transform="translate(330.1 62.7) scale(1.2 1)" font-size="35">i</text><path d="M246.3 24.4h7.5l1.6 22h-6.6zM293 24.4h7.3l2.4 22h-6.4z"/></g></g>
</svg>
<div id="paper">
<svg class="abs" style="left:0;top:0" width="595" height="489" viewBox="0 154 595 489">
<defs>
<marker id="ar" viewBox="0 0 10 6" refX="10" refY="3" markerWidth="9" markerHeight="5" orient="auto-start-reverse" markerUnits="userSpaceOnUse"><path d="M0 0L10 3L0 6Z" fill="#2fd02f"/></marker>
</defs>
<rect x="0" y="212.2" width="434.5" height="316.8" fill="#20262f"/>
<rect x="0" y="541.3" width="435.6" height="103" fill="#20262f"/>
<text x="-6" y="191" font-family="'Liberation Serif','Noto Serif CJK SC',serif" font-size="16" fill="#2a2a2a">三、题目</text>
<!-- red centre lines -->
<g stroke="#6a2226" stroke-width="1" opacity=".3" fill="none">
<line x1="194.5" y1="236" x2="194.5" y2="529"/>
<line x1="194.5" y1="280" x2="392" y2="437"/>
<line x1="194.5" y1="280" x2="74" y2="485"/>
<line x1="150" y1="280" x2="240" y2="280"/>
</g>
<!-- part outline -->
<g transform="translate(194.5 280) scale(3.67 2.917)" fill="none" stroke="#f4f6f8" stroke-width="2.7" stroke-linejoin="round">
<path vector-effect="non-scaling-stroke" d="M -7.333 9.5 A 12 12 0 1 1 7.333 9.5 A 6 6 0 0 0 5 14.25 L 5 40.311 A 15 15 0 0 0 26.667 53.748 A 60 60 0 0 0 42.426 42.426 A 9 9 0 0 1 55.154 55.154 A 78 78 0 0 1 -32.346 70.977 A 9 9 0 0 1 -24.882 54.598 A 60 60 0 0 0 -12.222 58.744 A 6 6 0 0 0 -5 52.874 L -5 14.25 A 6 6 0 0 0 -7.333 9.5 Z"/>
<path vector-effect="non-scaling-stroke" d="M 0 64 A 64 64 0 0 0 45.255 45.255 A 5 5 0 0 1 52.326 52.326 A 74 74 0 0 1 0 74 A 5 5 0 0 1 0 64 Z"/>
<circle vector-effect="non-scaling-stroke" cx="0" cy="0" r="9"/>
<circle vector-effect="non-scaling-stroke" cx="-28.614" cy="62.787" r="5"/>
</g>
<!-- dimensions -->
<g stroke="#2b6b3a" stroke-width="1" fill="none">
<line x1="194.5" y1="279" x2="258" y2="236" marker-end="none"/>
<line x1="194.5" y1="279" x2="272" y2="257"/>
<line x1="219" y1="313" x2="236" y2="319"/>
<line x1="177" y1="346.5" x2="213" y2="346.5"/>
<path d="M195 383 Q245 381 287 353"/>
<path d="M135 385 Q165 395 191 394.5"/>
<line x1="236" y1="429" x2="250" y2="412"/>
<line x1="296" y1="410" x2="311" y2="438"/>
<line x1="391" y1="371" x2="374" y2="421"/>
<line x1="153" y1="430" x2="171" y2="441"/>
<line x1="146" y1="501" x2="151" y2="458"/>
<line x1="40" y1="480" x2="89" y2="462"/>
</g>
<g stroke="#1b7526" stroke-width="1" fill="none">
<line x1="113.5" y1="559" x2="273.5" y2="559"/>
<line x1="113.5" y1="553" x2="113.5" y2="644"/>
<line x1="273.5" y1="553" x2="273.5" y2="644"/>
<line x1="345" y1="599" x2="318" y2="637" stroke="#2b5a38"/>
<line x1="376" y1="617" x2="348" y2="643" stroke="#2b5a38"/>
</g>
<g fill="#2fc93b">
<path d="M231 256l-8 2.5 4 4.5z"/>
<path d="M239 267l-9 -0.5 1.5 5z"/>
<path d="M216 312l8 5 1.5 -4.5z"/>
<path d="M177.5 346.5l8 -2.5v5zM212.5 346.5l-8 -2.5v5z"/>
<path d="M195 383l9 -2.5v5zM287 353l-5.5 7 -3 -4z"/>
<path d="M135 385l9 0.5 -1.5 5zM191 394.5l-9 -2.5v5z"/>
<path d="M232 433l3 -8 4 3.5z"/>
<path d="M312 440l-6.5 -6 4.5 -2z"/>
<path d="M384 396l0 -9 5 1.5z"/>
<path d="M174 443l-8.5 -2.5 3 -4.5z"/>
<path d="M145.5 504l-1.5 -9 5 0.5z"/>
<path d="M64 471l8.5 -0.5 -2 -4.5z"/>
<path d="M113.5 559l9 -2.5v5zM273.5 559l-9 -2.5v5z"/>
<path d="M331 622l2.5 -8.5 4 3z"/>
</g>
<g font-family="'Liberation Sans',sans-serif" font-size="11.5" fill="#34cf40" text-anchor="middle" font-weight="bold" stroke="#125a1c" stroke-width="1.3" paint-order="stroke" stroke-linejoin="round">
<text transform="translate(265.3 234.7) rotate(-35)">R9</text>
<text transform="translate(284 257) rotate(-15)">R12</text>
<text transform="translate(241 323) rotate(22)">R6</text>
<text x="194.5" y="344.5">10</text>
<text transform="translate(241 375) rotate(-20)">45°</text>
<text transform="translate(164 392) rotate(8)">25°</text>
<text transform="translate(250 411) rotate(-40)">R15</text>
<text transform="translate(290 407) rotate(62)">R64</text>
<text transform="translate(393 365) rotate(-72)">R9</text>
<text transform="translate(152 431) rotate(25)">R6</text>
<text transform="translate(149.5 471.5) rotate(-85)">R78</text>
<text transform="translate(30 484.5) rotate(-20)">R5</text>
<text x="193.5" y="556" font-size="12.5">41</text>
<text transform="translate(355 593) rotate(-45)" font-size="13">R22</text>
<text transform="translate(390 612) rotate(-40)" font-size="13">R12</text>
<text transform="translate(80 645) rotate(-38)" font-size="13">R</text>
</g>
<!-- second drawing arc -->
<g fill="none" stroke="#f4f6f8" stroke-width="2.7">
<ellipse cx="273.3" cy="667" rx="78.5" ry="64"/>
<ellipse cx="273.3" cy="667" rx="32" ry="26"/>
</g>
<!-- UCS icon -->
<g stroke="#d8dadd" stroke-width="1" fill="none">
<path d="M12.5 627V598M16 630.5H45"/>
<rect x="9.5" y="627.5" width="6" height="6"/>
</g>
<g font-family="'Liberation Sans',sans-serif" font-size="12.5" fill="#e0e2e5">
<text x="13.2" y="594">Y</text><text x="48.5" y="630">X</text>
</g>
</svg>
</div>
<div id="model">
<svg class="abs" style="left:0;top:0" width="685" height="489" viewBox="595 154 685 489">
<g stroke="#cdcdcd" stroke-width="1.1" fill="none">
<path d="M870 371.5H899.5M907.5 371.5H936M903.5 337.5V367.5M903.5 375.5V403.5"/>
<rect x="899.5" y="367.5" width="8" height="8" stroke="#e0e0e0" stroke-width="1.2"/>
</g>
</svg>
</div>
<div id="cmd">
<div id="cmdstrip" class="abs" style="left:0;top:0;width:1280px;height:3.5px;background:#3a3c50"></div>
<div class="abs" style="left:16px;top:3.5px;width:1263px;height:29.5px;background:#c9c9c9"></div>
<div class="abs" style="left:16px;top:33px;width:1263px;height:1px;background:#6c6f73"></div>
<div class="abs" style="left:16px;top:34px;width:1263px;height:12.8px;background:#fff"></div>
<div class="t" style="left:18.5px;top:13.2px;font:bold 8.2px/10px 'Liberation Mono','Noto Sans CJK SC',monospace;color:#e8333a;letter-spacing:.25px">命令: *取消*</div>
<div class="t" style="left:18.5px;top:22.5px;font:bold 8.2px/10px 'Liberation Mono','Noto Sans CJK SC',monospace;color:#e8333a;letter-spacing:.25px">命令: *取消*</div>
<div class="t" style="left:42px;top:36px;font:italic 8.5px/9px 'Liberation Sans','Noto Sans CJK SC',sans-serif;color:#8d8f92;transform:skewX(-12deg)">键入命令</div>
<svg class="abs" style="left:0;top:.5px" width="60" height="47" viewBox="0 643 60 47">
<g fill="#e8eaee">
<rect x="2.5" y="648" width="12" height="1.2"/><rect x="2.5" y="650.2" width="12" height="1.2"/>
</g>
<g stroke="#2a313c" stroke-width=".8"><path d="M4.5 647.5v4.5M6.5 647.5v4.5M8.5 647.5v4.5M10.5 647.5v4.5M12.5 647.5v4.5"/></g>
<path d="M5.5 657.5l5.5 6M11 657.5l-5.5 6" stroke="#eef0f3" stroke-width="1.5" fill="none"/>
<path d="M3.5 681.5l6.5 -7" stroke="#e8eaee" stroke-width="1.8" stroke-linecap="round" fill="none"/>
<path d="M9 672.5a3 3 0 1 0 3.5 3.5l-2 .3 -1.5 -1.5z" fill="#e8eaee"/>
<rect x="19.5" y="679" width="10.5" height="7.5" fill="#f4f4f4" stroke="#55585c" stroke-width="1"/>
<rect x="19.5" y="679" width="10.5" height="2" fill="#55585c"/>
<path d="M22 683l1.5 1 -1.5 1M24.5 685h2.5" stroke="#55585c" stroke-width=".7" fill="none"/>
<path d="M32.5 681.5h4l-2 2.5z" fill="#55585c"/>
</g>
</svg>
</div>
<div id="status"><div class="abs" style="left:33px;top:1px;width:32px;height:12px;background:#2c333f"></div>
<div class="abs" style="left:678px;top:4.6px;width:14.5px;height:10px;background:#5a8dc8"></div>
<div class="abs" style="left:696px;top:4.6px;width:13px;height:10px;background:#5a8dc8"></div>
<div class="abs" style="left:765px;top:4.6px;width:14px;height:10px;background:#5a8dc8"></div>
<div class="abs" style="left:781px;top:4.6px;width:14px;height:10px;background:#5a8dc8"></div>
<div class="abs" style="left:808px;top:4.6px;width:14.5px;height:10px;background:#5a8dc8"></div>
<div class="abs" style="left:885px;top:4.6px;width:15.5px;height:10px;background:#5a8dc8"></div>
<div class="abs" style="left:914.6px;top:4.6px;width:15.399999999999977px;height:10px;background:#5a8dc8"></div>
<div class="abs" style="left:1041px;top:4.6px;width:15px;height:10px;background:#5a8dc8"></div>
<div class="abs" style="left:1187px;top:4.6px;width:15.599999999999909px;height:10px;background:#5a8dc8"></div>
<div class="t" style="left:39px;top:7.7px;font-size:9px;font-weight:bold;color:#f0f2f5">模型</div>
<div class="t" style="left:71px;top:7.7px;font-size:9px;color:#e3e6ea">布局1</div>
<div class="t" style="left:107px;top:7.7px;font-size:9px;color:#e3e6ea">布局2</div>
<div class="t" style="left:598px;top:7.3px;font-size:8.5px;color:#d8dce2">模型</div>
<div class="t" style="left:965px;top:7.3px;font-size:8.5px;color:#d8dce2">1:1 / 100%</div>
<div class="t" style="left:1077.5px;top:7.3px;font-size:8.5px;color:#d8dce2">小数</div>
<svg class="abs" style="left:0;top:0" width="1280" height="12" viewBox="0 690 1280 12">
<g fill="#f0f2f5">
<rect x="10" y="696.8" width="11.5" height="1.6"/><rect x="10" y="700" width="11.5" height="1.6"/>
<rect x="149.5" y="695" width="1.6" height="7"/><rect x="145" y="700.3" width="10.5" height="1.6"/>
<rect x="1264.5" y="697" width="12.5" height="1.6"/><rect x="1264.5" y="700.5" width="12.5" height="1.6"/>
</g>
<g stroke="#cfd4db" stroke-width="1" fill="none">
<path d="M618 700.5h11M618 698.5h11M621 697v5M624 697v5M627 697v5"/>
<path d="M635 700.5h1.5M638.5 700.5h1.5M642 700.5h1.5M645.5 700.5h1.5" />
<rect x="667.5" y="697.5" width="5" height="6"/>
<path d="M682 702l3.5 -4 3.5 4" stroke="#eaf0f8"/>
<path d="M702.5 696v7" stroke="#eaf0f8"/>
<path d="M713 702a4 4 0 0 1 6 -3.5M719 698l4 4" />
<path d="M769 702l7 -6" stroke="#eaf0f8"/>
<path d="M784 698.5h8M786 698.5v4" stroke="#eaf0f8"/>
<path d="M811 698h9M811 700.5h9" stroke="#eaf0f8"/>
<path d="M827 699.5a2.5 2.5 0 0 1 5 0M831 699.5a2.5 2.5 0 0 1 5 0"/>
<path d="M844 702v-3h8v3M846 699l2 -2h5"/>
<path d="M873 698v4M877 698.5l2 2"/>
<path d="M888 702l4.5 -4 4.5 4" stroke="#eaf0f8"/>
<path d="M918 699h8M922 697v5" stroke="#eaf0f8"/>
<path d="M937 698l2 4M941 698l2 4"/>
<path d="M954.5 698v4"/>
<path d="M1017 700h8M1021 697v5M1018 698l6 4"/>
<path d="M1048.5 696v6" stroke="#eaf0f8"/>
<path d="M1064 698h5M1064 700.5h6"/>
<rect x="1128.5" y="698.5" width="7.5" height="5"/>
<rect x="1144" y="697.5" width="10.5" height="6"/>
<rect x="1172" y="698.5" width="4" height="5"/><circle cx="1180" cy="701" r="2"/>
<path d="M1190 702a5 4.5 0 0 1 10 0" stroke="#eaf0f8"/>
<path d="M1212 700v3M1216 699v4M1219 699v4"/>
<rect x="1227" y="698.5" width="11" height="5" fill="#cfd4db"/>
<rect x="1248" y="699.5" width="10.5" height="4"/>
</g>
<g fill="#cfd4db">
<path d="M650 701.3h4v.9h-4zM731 701.3h4v.9h-4zM748 701.3h4v.9h-4zM799 701.3h4v.9h-4zM859 701.3h4v.9h-4zM904 701.3h4v.9h-4zM1004 701.3h4v.9h-4zM1032 701.3h4v.9h-4zM1116 701.3h4v.9h-4zM1161 701.3h4v.9h-4z"/>
</g>
<g stroke="#4a5363" stroke-width="1"><path d="M661.5 692v10M1013 692v10M1059.5 692v10M1243 692v10"/></g>
</svg></div>
</div>
</body>
</html>
